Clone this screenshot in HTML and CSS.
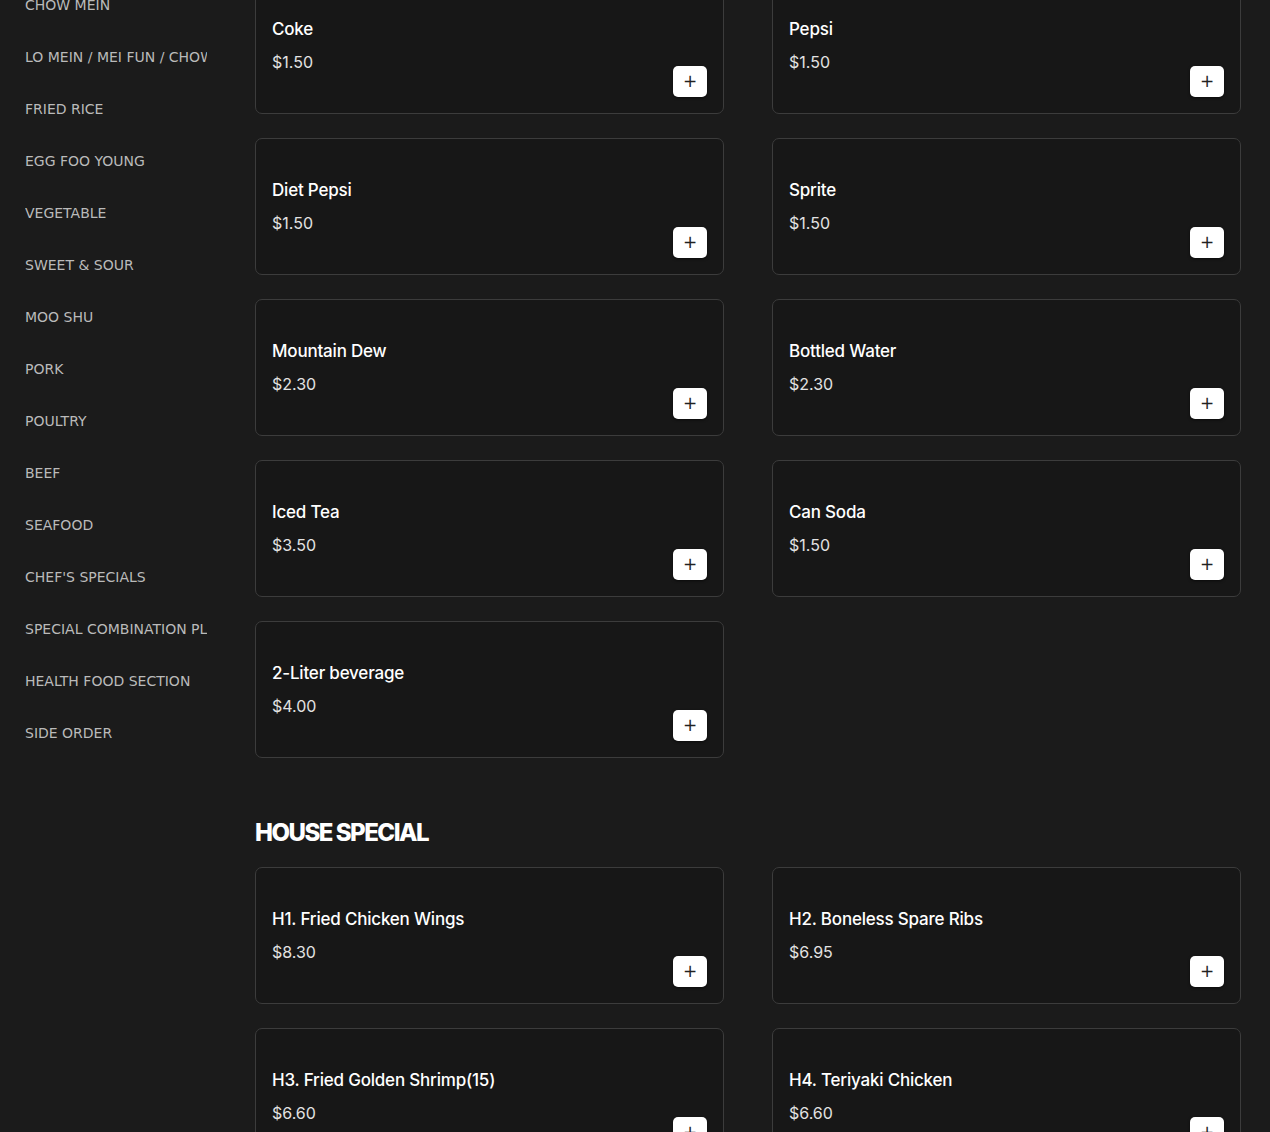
FILE: index.html
```html
<!DOCTYPE html>
<html lang="en">
<head>
<meta charset="utf-8">
<title>Menu</title>
<link rel="stylesheet" href="styles.css">
</head>
<body>
<div class="page">
  <nav class="sidebar">
    <a class="nav-item">Chow Mein</a>
    <a class="nav-item">Lo Mein / Mei Fun / Chow Fun</a>
    <a class="nav-item">Fried Rice</a>
    <a class="nav-item">Egg Foo Young</a>
    <a class="nav-item">Vegetable</a>
    <a class="nav-item">Sweet &amp; Sour</a>
    <a class="nav-item">Moo Shu</a>
    <a class="nav-item">Pork</a>
    <a class="nav-item">Poultry</a>
    <a class="nav-item">Beef</a>
    <a class="nav-item">Seafood</a>
    <a class="nav-item">Chef's Specials</a>
    <a class="nav-item">Special Combination Platter</a>
    <a class="nav-item">Health Food Section</a>
    <a class="nav-item">Side Order</a>
  </nav>
  <main class="menu">
    <section class="category">
      <div class="grid">
        <div class="card"><div class="info"><div class="name">Coke</div><div class="price">$1.50</div></div><button class="add" aria-label="Add">+</button></div>
        <div class="card"><div class="info"><div class="name">Pepsi</div><div class="price">$1.50</div></div><button class="add" aria-label="Add">+</button></div>
        <div class="card"><div class="info"><div class="name">Diet Pepsi</div><div class="price">$1.50</div></div><button class="add" aria-label="Add">+</button></div>
        <div class="card"><div class="info"><div class="name">Sprite</div><div class="price">$1.50</div></div><button class="add" aria-label="Add">+</button></div>
        <div class="card"><div class="info"><div class="name">Mountain Dew</div><div class="price">$2.30</div></div><button class="add" aria-label="Add">+</button></div>
        <div class="card"><div class="info"><div class="name">Bottled Water</div><div class="price">$2.30</div></div><button class="add" aria-label="Add">+</button></div>
        <div class="card"><div class="info"><div class="name">Iced Tea</div><div class="price">$3.50</div></div><button class="add" aria-label="Add">+</button></div>
        <div class="card"><div class="info"><div class="name">Can Soda</div><div class="price">$1.50</div></div><button class="add" aria-label="Add">+</button></div>
        <div class="card"><div class="info"><div class="name">2-Liter beverage</div><div class="price">$4.00</div></div><button class="add" aria-label="Add">+</button></div>
      </div>
    </section>
    <section class="category">
      <h2 class="cat-title">HOUSE SPECIAL</h2>
      <div class="grid">
        <div class="card"><div class="info"><div class="name">H1. Fried Chicken Wings</div><div class="price">$8.30</div></div><button class="add" aria-label="Add">+</button></div>
        <div class="card"><div class="info"><div class="name">H2. Boneless Spare Ribs</div><div class="price">$6.95</div></div><button class="add" aria-label="Add">+</button></div>
        <div class="card"><div class="info"><div class="name">H3. Fried Golden Shrimp(15)</div><div class="price">$6.60</div></div><button class="add" aria-label="Add">+</button></div>
        <div class="card"><div class="info"><div class="name">H4. Teriyaki Chicken</div><div class="price">$6.60</div></div><button class="add" aria-label="Add">+</button></div>
      </div>
    </section>
  </main>
</div>
</body>
</html>
```

FILE: styles.css
```css
html, body {
  margin: 0;
  padding: 0;
  background: #1b1b1b;
}
body {
  font-family: "Inter", "Open Sans", sans-serif;
  color: #ffffff;
  overflow: hidden;
  height: 1132px;
}
.page {
  display: flex;
  gap: 48px;
  margin-top: -23px;
  padding-right: 30px;
}
.sidebar {
  width: 182px;
  flex: none;
  padding: 2px 0 0 25px;
  display: flex;
  flex-direction: column;
}
.nav-item {
  display: block;
  padding: 16px 0;
  font-family: "DejaVu Sans", sans-serif;
  font-size: 14px;
  line-height: 20px;
  color: #bababa;
  text-transform: uppercase;
  white-space: nowrap;
  overflow: hidden;
}
.menu {
  flex: 1;
  display: flex;
  flex-direction: column;
  gap: 60px;
}
.cat-title {
  margin: 0 0 19px;
  font-family: "Inter", sans-serif;
  font-weight: 800;
  font-size: 24px;
  line-height: 30px;
  letter-spacing: -1.5px;
  color: #ffffff;
}
.grid {
  display: grid;
  grid-template-columns: 469px 469px;
  column-gap: 48px;
  row-gap: 24px;
}
.card {
  box-sizing: border-box;
  height: 137px;
  background: #171717;
  border: 1px solid #3c3c3c;
  border-radius: 7px;
  padding: 16px;
  display: flex;
  justify-content: space-between;
  align-items: flex-end;
}
.info {
  align-self: flex-start;
  padding-top: 23px;
  display: flex;
  flex-direction: column;
  gap: 9px;
}
.name {
  font-size: 17px;
  line-height: 24px;
  font-weight: 500;
  letter-spacing: -0.2px;
  color: #ffffff;
}
.price {
  font-size: 16px;
  line-height: 24px;
  font-weight: 400;
  color: #e2e2e2;
}
.add {
  width: 34px;
  height: 31px;
  border: none;
  border-radius: 5px;
  background: #ffffff;
  color: #222;
  font-family: "DejaVu Sans", sans-serif;
  font-size: 17px;
  line-height: 31px;
  padding: 0;
  box-shadow: 0 1px 3px rgba(0,0,0,0.6);
}
```
